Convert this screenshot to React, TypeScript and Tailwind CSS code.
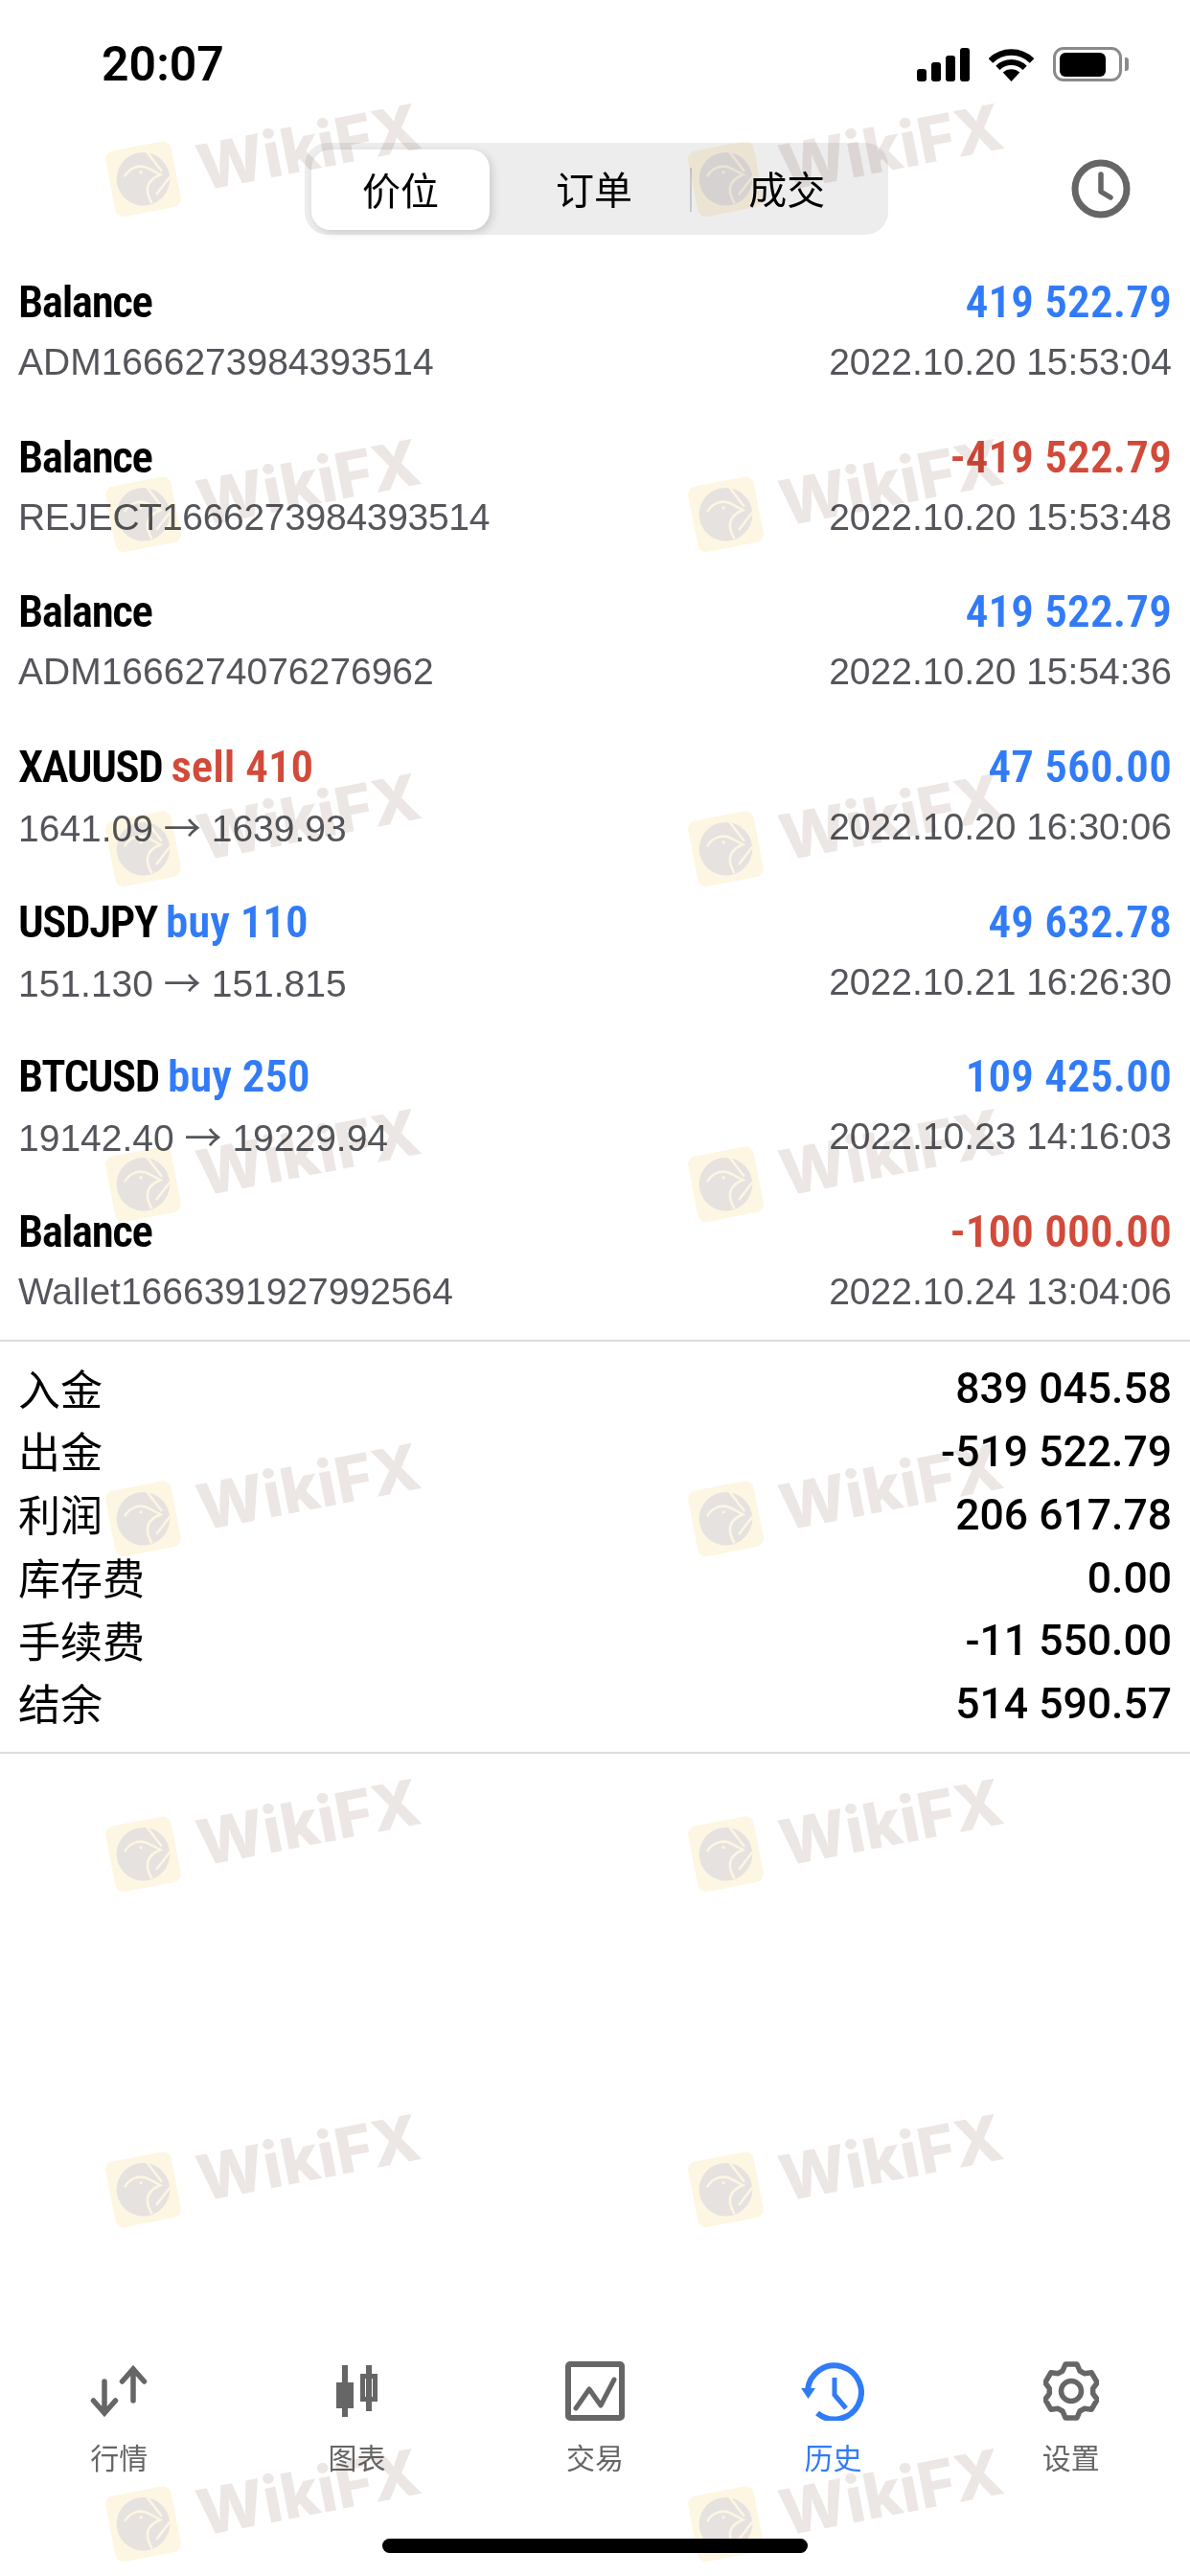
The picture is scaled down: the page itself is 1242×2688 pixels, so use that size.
import React from 'react'

const titleFont = 'font-["Roboto_Condensed","Liberation_Sans_Narrow","Liberation_Sans",sans-serif]'
const subFont = 'font-["Liberation_Sans",Arial,sans-serif]'
const cjkFont = 'font-["Noto_Sans_CJK_SC",sans-serif]'

type Trade = {
  name: string
  side?: string
  sideColor?: string
  amount: string
  amountColor: string
  from?: string
  to?: string
  sub?: string
  time: string
}

const BLUE = 'text-[#327bf6]'
const RED = 'text-[#d24a3a]'

const trades: Trade[] = [
  { name: 'Balance', amount: '419 522.79', amountColor: BLUE, sub: 'ADM1666273984393514', time: '2022.10.20 15:53:04' },
  { name: 'Balance', amount: '-419 522.79', amountColor: RED, sub: 'REJECT1666273984393514', time: '2022.10.20 15:53:48' },
  { name: 'Balance', amount: '419 522.79', amountColor: BLUE, sub: 'ADM1666274076276962', time: '2022.10.20 15:54:36' },
  { name: 'XAUUSD', side: 'sell 410', sideColor: RED, amount: '47 560.00', amountColor: BLUE, from: '1641.09', to: '1639.93', time: '2022.10.20 16:30:06' },
  { name: 'USDJPY', side: 'buy 110', sideColor: BLUE, amount: '49 632.78', amountColor: BLUE, from: '151.130', to: '151.815', time: '2022.10.21 16:26:30' },
  { name: 'BTCUSD', side: 'buy 250', sideColor: BLUE, amount: '109 425.00', amountColor: BLUE, from: '19142.40', to: '19229.94', time: '2022.10.23 14:16:03' },
  { name: 'Balance', amount: '-100 000.00', amountColor: RED, sub: 'Wallet1666391927992564', time: '2022.10.24 13:04:06' },
]

const summary = [
  ['入金', '839 045.58'],
  ['出金', '-519 522.79'],
  ['利润', '206 617.78'],
  ['库存费', '0.00'],
  ['手续费', '-11 550.00'],
  ['结余', '514 590.57'],
]

// six tooth gear outline, centre 29,31
const gearPoints = (() => {
  const pts: string[] = []
  for (let i = 0; i < 6; i++) {
    const a = ((-90 + i * 60) * Math.PI) / 180
    const at = (r: number, off: number) => {
      const x = 29 + r * Math.cos(a) - off * Math.sin(a)
      const y = 31 + r * Math.sin(a) + off * Math.cos(a)
      return `${x.toFixed(1)},${y.toFixed(1)}`
    }
    pts.push(at(21, -9), at(28, -6), at(28, 6), at(21, 9))
  }
  return pts.join(' ')
})()

function Watermark() {
  return (
    <div className="flex h-[70px] w-[340px] -rotate-[11deg] items-center gap-[23px]">
      <svg width="70" height="70" viewBox="0 0 68 68" className="shrink-0">
        <rect width="68" height="68" rx="9" fill="#fdf6e2" />
        <circle cx="34" cy="34" r="27" fill="#e6e2e0" />
        <path d="M43 8L54 30M61 37L44 52M38 60C33 46 36 36 52 33L42 25C34 18 22 20 16 28" stroke="#fdf6e2" strokeWidth="2.5" fill="none" />
        <circle cx="33" cy="27" r="1.6" fill="#fdf6e2" />
      </svg>
      <span className='font-["Inter",sans-serif] text-[66px] leading-none font-extrabold text-[#ece7e4]'>WikiFX</span>
    </div>
  )
}

function StatusIcons() {
  return (
    <div className="flex items-center">
      <svg width="55" height="35" viewBox="0 0 55 35" fill="#000">
        <rect x="0" y="22" width="10" height="13" rx="3" />
        <rect x="15" y="15" width="10" height="20" rx="3" />
        <rect x="30" y="8" width="10" height="27" rx="3" />
        <rect x="45" y="0" width="10" height="35" rx="3" />
      </svg>
      <svg width="47" height="35" viewBox="0 0 47 35" fill="none" stroke="#000" className="ml-[20px]">
        <path d="M23.5 35L14.7 25.6A13 13 0 0 1 32.3 25.6Z" fill="#000" stroke="none" />
        <path d="M9.4 20.9A20 20 0 0 1 37.6 20.9" strokeWidth="6" />
        <path d="M1.9 13.4A30.5 30.5 0 0 1 45.1 13.4" strokeWidth="6.5" />
      </svg>
      <div className="ml-[20px] flex h-[36px] w-[72px] items-center rounded-[11px] border-[3px] border-[#8a8a8a] pl-[4px]">
        <div className="h-[25px] w-[48px] rounded-[6px] bg-black" />
      </div>
      <div className="ml-[3px] h-[14px] w-[4px] rounded-r-[3px] bg-[#8a8a8a]" />
    </div>
  )
}

function ClockIcon() {
  return (
    <svg width="62" height="62" viewBox="0 0 62 62" fill="none" stroke="#666" strokeLinecap="round" strokeLinejoin="round">
      <circle cx="31" cy="31" r="27" strokeWidth="7" />
      <path d="M31 16V34L41 40" strokeWidth="5.5" />
    </svg>
  )
}

function Segmented() {
  return (
    <div className="relative flex h-[96px] w-[609px] rounded-[24px] bg-[#ededee] p-[7px] pb-[5px]">
      <div className={`${cjkFont} flex h-[84px] w-[188px] items-center justify-center rounded-[20px] bg-white pb-[2px] text-[40px] text-black shadow-[3px_3px_8px_rgba(0,0,0,0.14)]`}>价位</div>
      <div className={`${cjkFont} flex w-[212px] items-center justify-center pb-[5px] pl-[9px] text-[40px] text-black`}>订单</div>
      <div className="my-[19px] w-[2px] bg-[#c8c8ca]" />
      <div className={`${cjkFont} flex w-[200px] items-center justify-center pb-[5px] text-[40px] text-black`}>成交</div>
    </div>
  )
}

function TradeRow({ t }: { t: Trade }) {
  return (
    <div className="h-[161.67px] px-[19px] pt-[19px]">
      <div className={`${titleFont} flex h-[60px] items-center justify-between text-[47px] leading-[60px] font-semibold`}>
        <span className="text-black">
          <span className="tracking-[-1.4px]">{t.name}</span>
          {t.side && <span className={`ml-[9px] ${t.sideColor}`}>{t.side}</span>}
        </span>
        <span className={`tracking-[0.2px] ${t.amountColor}`}>{t.amount}</span>
      </div>
      <div className={`${subFont} mt-[3px] flex h-[60px] items-center justify-between text-[39px] leading-[60px] text-[#55565b]`}>
        {t.sub ? (
          <span className={t.sub.startsWith('REJECT') ? 'tracking-[-0.3px]' : ''}>{t.sub}</span>
        ) : (
          <span>
            {t.from} <span className={cjkFont}>→</span> {t.to}
          </span>
        )}
        <span>{t.time}</span>
      </div>
    </div>
  )
}

function NavItem({ label, active, children }: { label: string; active?: boolean; children: React.ReactNode }) {
  return (
    <div className="flex flex-col items-center">
      <div className="flex h-[62px] items-center justify-center">{children}</div>
      <div className={`${cjkFont} mt-[17px] text-[30px] leading-[40px] ${active ? 'text-[#327bf6]' : 'text-[#666]'}`}>{label}</div>
    </div>
  )
}

function BottomNav() {
  return (
    <div className="grid grid-cols-5">
      <NavItem label="行情">
        <svg width="60" height="54" viewBox="0 0 60 54" fill="none" stroke="#666" strokeWidth="5.5" strokeLinecap="round">
          <path d="M15 17V50M3.5 37L15 50L26.5 37" />
          <path d="M45 37V4M33.5 17L45 4L56.5 17" />
        </svg>
      </NavItem>
      <NavItem label="图表">
        <svg width="44" height="54" viewBox="0 0 44 54" fill="#666">
          <rect x="6" y="0" width="6" height="54" />
          <rect x="0" y="18" width="18" height="27" />
          <rect x="31" y="0" width="6" height="48" />
          <path fillRule="evenodd" d="M25 9H43V38H25ZM30 14V33H38V14Z" />
        </svg>
      </NavItem>
      <NavItem label="交易">
        <svg width="62" height="62" viewBox="0 0 62 62" fill="none" stroke="#666" strokeLinecap="round" strokeLinejoin="round">
          <rect x="3" y="3" width="56" height="56" rx="2" strokeWidth="6" />
          <path d="M11 49L25 29L37 46L51 19" strokeWidth="5" />
        </svg>
      </NavItem>
      <NavItem label="历史" active>
        <svg width="66" height="62" viewBox="0 0 66 62" fill="none" stroke="#327bf6">
          <path d="M7 30A28 28 0 1 1 17 54" strokeWidth="6" />
          <path d="M0 28H15L7.5 39Z" fill="#327bf6" stroke="none" />
          <path d="M35 17V35L47 49" strokeWidth="5" />
        </svg>
      </NavItem>
      <NavItem label="设置">
        <svg width="58" height="62" viewBox="0 0 58 62" fill="none" stroke="#666" strokeLinejoin="round">
          <polygon points={gearPoints} strokeWidth="5.5" />
          <circle cx="29" cy="31" r="10.5" strokeWidth="5.5" />
        </svg>
      </NavItem>
    </div>
  )
}

export default function App() {
  const marks = Array.from({ length: 16 })

  return (
    <div className="relative flex h-[2688px] w-[1242px] flex-col overflow-hidden bg-white">
      {/* Status bar */}
      <div className="flex h-[134px] items-center justify-between pr-[64px] pl-[106px]">
        <span className='font-["Roboto",sans-serif] text-[50px] font-semibold text-black'>20:07</span>
        <StatusIcons />
      </div>

      {/* Tabs */}
      <div className="mt-[15px] flex items-center justify-between pr-[62px] pl-[318px]">
        <Segmented />
        <ClockIcon />
      </div>

      {/* Deals */}
      <div className="mt-[21px] border-b-2 border-[#dcdcdc]">
        {trades.map((t, i) => (
          <TradeRow key={i} t={t} />
        ))}
      </div>

      {/* Totals */}
      <div className="border-b-2 border-[#dcdcdc] px-[19px] pt-[16px] pb-[18px]">
        {summary.map(([label, value]) => (
          <div key={label} className="flex h-[65.8px] items-center justify-between text-black">
            <span className={`${cjkFont} pb-[2px] text-[44px]`}>{label}</span>
            <span className='pt-[2px] font-["Roboto",sans-serif] text-[44.5px] font-medium'>{value}</span>
          </div>
        ))}
      </div>

      <div className="flex-1" />

      <BottomNav />

      {/* Home indicator */}
      <div className="mt-[66px] mb-[24px] flex justify-center">
        <div className="h-[15px] w-[444px] rounded-full bg-black" />
      </div>

      {/* Watermark overlay */}
      <div className="pointer-events-none absolute inset-0 mix-blend-multiply">
        <div className="grid grid-cols-[608px_340px] auto-rows-[70px] gap-y-[279.6px] pt-[126px] pl-[112px]">
          {marks.map((_, i) => (
            <Watermark key={i} />
          ))}
        </div>
      </div>
    </div>
  )
}
